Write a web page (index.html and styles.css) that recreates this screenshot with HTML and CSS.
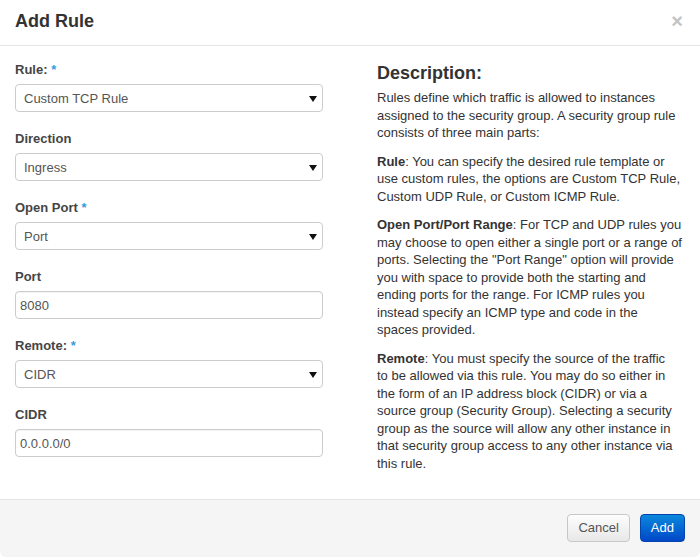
FILE: index.html
```html
<!DOCTYPE html>
<html>
<head>
<meta charset="utf-8">
<link rel="stylesheet" href="styles.css">
</head>
<body>
<div class="modal">
  <div class="modal-header">
    <h3 class="title">Add Rule</h3>
    <span class="close">×</span>
  </div>
  <div class="modal-body">
    <div class="left">
      <div class="group">
        <label class="label">Rule: <span class="req">*</span></label>
        <div class="select"><span>Custom TCP Rule</span><svg class="arrow" width="8" height="6" viewBox="0 0 8 6"><polygon points="0,0 8,0 4,6" fill="#111"/></svg></div>
      </div>
      <div class="group">
        <label class="label">Direction</label>
        <div class="select"><span>Ingress</span><svg class="arrow" width="8" height="6" viewBox="0 0 8 6"><polygon points="0,0 8,0 4,6" fill="#111"/></svg></div>
      </div>
      <div class="group">
        <label class="label">Open Port <span class="req">*</span></label>
        <div class="select"><span>Port</span><svg class="arrow" width="8" height="6" viewBox="0 0 8 6"><polygon points="0,0 8,0 4,6" fill="#111"/></svg></div>
      </div>
      <div class="group">
        <label class="label">Port</label>
        <div class="input">8080</div>
      </div>
      <div class="group">
        <label class="label">Remote: <span class="req">*</span></label>
        <div class="select"><span>CIDR</span><svg class="arrow" width="8" height="6" viewBox="0 0 8 6"><polygon points="0,0 8,0 4,6" fill="#111"/></svg></div>
      </div>
      <div class="group">
        <label class="label">CIDR</label>
        <div class="input">0.0.0.0/0</div>
      </div>
    </div>
    <div class="right">
      <h3 class="desc-title">Description:</h3>
      <p>Rules define which traffic is allowed to instances assigned to the security group. A security group rule consists of three main parts:</p>
      <p><strong>Rule</strong>: You can specify the desired rule template or use custom rules, the options are Custom TCP Rule, Custom UDP Rule, or Custom ICMP Rule.</p>
      <p><strong>Open Port/Port Range</strong>: For TCP and UDP rules you may choose to open either a single port or a range of ports. Selecting the "Port Range" option will provide you with space to provide both the starting and ending ports for the range. For ICMP rules you instead specify an ICMP type and code in the<br>spaces provided.</p>
      <p><strong>Remote</strong>: You must specify the source of the traffic<br>to be allowed via this rule. You may do so either in the form of an IP address block (CIDR) or via a source group (Security Group). Selecting a security group as the source will allow any other instance in that security group access to any other instance via this rule.</p>
    </div>
  </div>
  <div class="modal-footer">
    <button class="btn btn-cancel">Cancel</button>
    <button class="btn btn-primary">Add</button>
  </div>
</div>
</body>
</html>
```

FILE: styles.css
```css
* { box-sizing: border-box; }
html, body { margin: 0; padding: 0; background: #fff; }
body {
  font-family: "Liberation Sans", Arial, sans-serif;
  font-size: 13px;
  color: #333;
}
.modal {
  width: 700px;
  height: 557px;
  background: #fff;
  border-radius: 6px;
  overflow: hidden;
  display: flex;
  flex-direction: column;
}
.modal-header {
  height: 46px;
  border-bottom: 1px solid #e5e5e5;
  padding: 11px 15px 0 15px;
  display: flex;
  justify-content: space-between;
  align-items: flex-start;
}
.title {
  margin: 0;
  font-size: 18px;
  line-height: 20px;
  font-weight: bold;
  color: #333;
}
.close {
  font-size: 20px;
  font-weight: bold;
  line-height: 18px;
  color: #c4c4c4;
  margin-top: 1px;
  margin-right: 2px;
}
.modal-body {
  flex: 1;
  padding: 15px 15px 0 15px;
  display: flex;
  gap: 54px;
}
.left { width: 308px; flex: none; }
.right { width: 308px; flex: none; }
.group { margin-bottom: 18px; }
.label {
  display: block;
  font-weight: bold;
  color: #454545;
  line-height: 17px;
  margin-bottom: 6px;
}
.req { color: #3a9ad9; }
.select, .input {
  height: 28px;
  border: 1px solid #ccc;
  border-radius: 4px;
  color: #555;
  display: flex;
  align-items: center;
  background: #fff;
}
.select {
  padding: 0 5px 0 8px;
  justify-content: space-between;
}
.input {
  padding: 0 4px;
  box-shadow: inset 0 1px 1px rgba(0,0,0,0.05);
}
.arrow { display: block; margin-top: 1px; }
.desc-title {
  margin: 0 0 4px 0;
  font-size: 18px;
  line-height: 24px;
  font-weight: bold;
  color: #333;
}
.right p {
  margin: 0 0 11px 0;
  line-height: 17.5px;
  color: #333;
}
.right strong { color: #333; }
.modal-footer {
  height: 58px;
  border-top: 1px solid #e5e5e5;
  background: #f5f5f5;
  padding: 14px 15px 0 15px;
  display: flex;
  justify-content: flex-end;
  align-items: flex-start;
  gap: 10px;
}
.btn {
  font-family: "Liberation Sans", Arial, sans-serif;
  font-size: 13px;
  height: 28px;
  padding: 0 10px;
  border-radius: 4px;
  line-height: 26px;
  cursor: pointer;
}
.btn-cancel {
  color: #555;
  background: linear-gradient(#fdfdfd, #e8e8e8);
  border: 1px solid #c8c8c8;
  box-shadow: inset 0 1px 0 rgba(255,255,255,0.3);
}
.btn-primary {
  color: #fff;
  background: linear-gradient(#0a88dc, #0048c8);
  border: 1px solid #0345ad;
}
```
